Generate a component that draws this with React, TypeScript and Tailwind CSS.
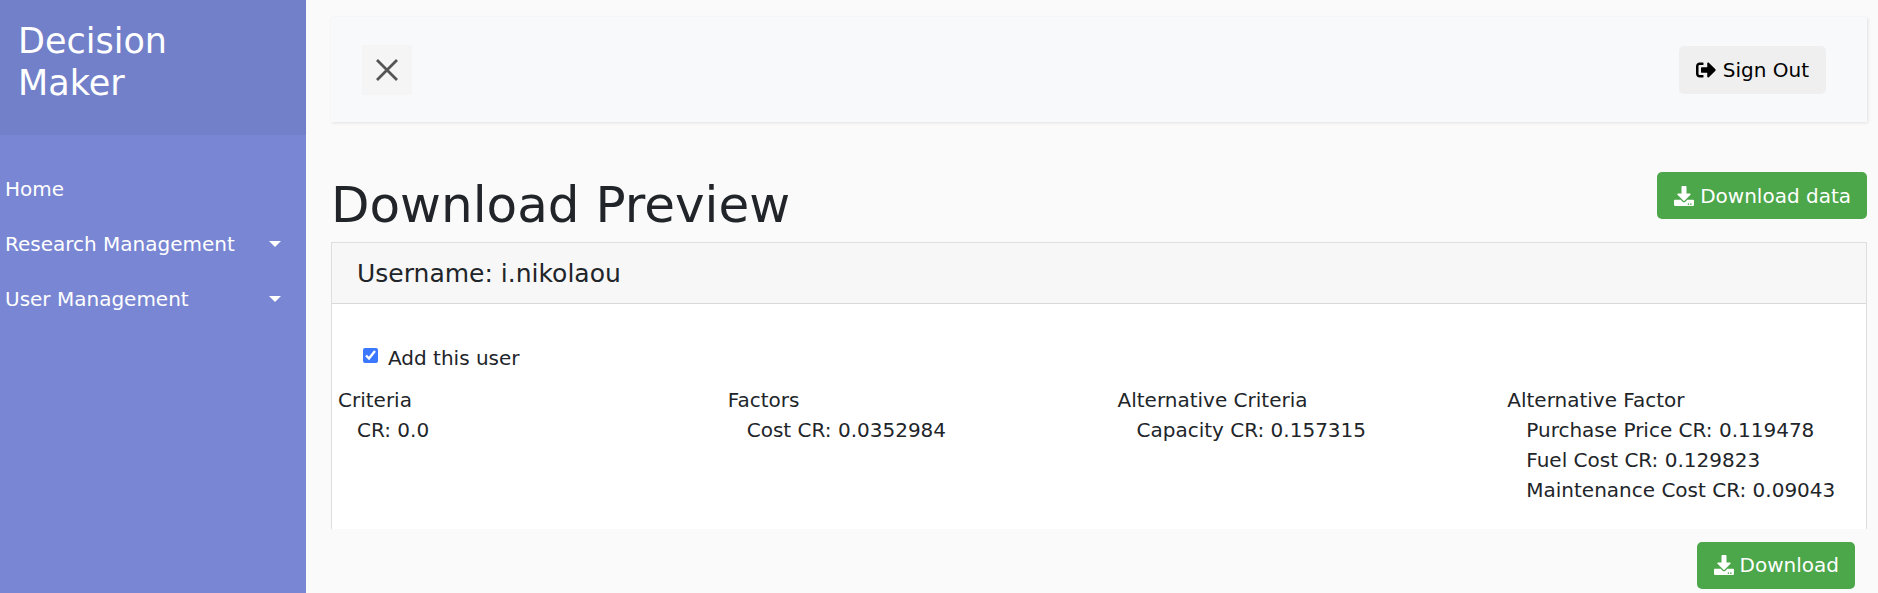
import { FaDownload, FaSignOutAlt } from "react-icons/fa";

const groups = [
  { title: "Criteria", items: ["CR: 0.0"] },
  { title: "Factors", items: ["Cost CR: 0.0352984"] },
  { title: "Alternative Criteria", items: ["Capacity CR: 0.157315"] },
  {
    title: "Alternative Factor",
    items: ["Purchase Price CR: 0.119478", "Fuel Cost CR: 0.129823", "Maintenance Cost CR: 0.09043"],
  },
];

const links = [
  { label: "Home", menu: false },
  { label: "Research Management", menu: true },
  { label: "User Management", menu: true },
];

function Caret() {
  return (
    <svg width="12" height="6" viewBox="0 0 12 6" fill="currentColor" aria-hidden="true">
      <path d="M0 0H12L6 6Z" />
    </svg>
  );
}

function DownloadButton({ label }: { label: string }) {
  return (
    <button type="button" className="flex h-[47px] items-center gap-[6px] rounded-[5px] bg-[#4ca64a] pr-4 pl-[17px] text-white">
      <FaDownload className="size-5" aria-hidden="true" />
      {label}
    </button>
  );
}

export default function App() {
  return (
    <div className="flex min-h-screen bg-[#fafafa] font-['DejaVu_Sans',sans-serif] text-[20px] leading-[30px] text-[#212529]">
      <aside className="w-[306px] shrink-0 bg-[#7986d3] text-white">
        <div className="bg-[#7280c9] px-[18px] pt-5 pb-[31px] text-[35px] leading-[42px]">
          <div className="w-40">Decision Maker</div>
        </div>
        <nav className="pt-[26px]">
          <ul>
            {links.map((link) => (
              <li key={link.label}>
                <a href="#" className="flex h-[55px] items-center justify-between pr-[25px] pl-[5px]">
                  {link.label}
                  {link.menu && <Caret />}
                </a>
              </li>
            ))}
          </ul>
        </nav>
      </aside>

      <main className="min-w-0 flex-1 pt-[17px] pr-[11px] pl-[25px]">
        <header className="flex h-[105px] items-center justify-between bg-[#f8f9fb] pr-[41px] pl-[31px] shadow-[1px_1px_3px_rgba(0,0,0,0.1)]">
          <button type="button" aria-label="Toggle sidebar" className="flex size-[50px] items-center justify-center bg-[#f5f5f5] text-[#555]">
            <svg width="22" height="22" viewBox="0 0 22 22" stroke="currentColor" strokeWidth="2.8" aria-hidden="true">
              <path d="M1 1L21 21M21 1L1 21" />
            </svg>
          </button>
          <button type="button" className="flex h-12 items-center gap-[7px] rounded-[5px] bg-[#efefef] px-[17px] text-black">
            <FaSignOutAlt className="size-5" aria-hidden="true" />
            Sign Out
          </button>
        </header>

        <div className="mt-[50px] flex items-start justify-between">
          <h1 className="pt-[3px] text-[50px] leading-[60px]">Download Preview</h1>
          <DownloadButton label="Download data" />
        </div>

        <section className="mt-[7px] overflow-hidden border border-b-0 border-[#dedede] bg-white">
          <h2 className="border-b border-[#d9d9d9] bg-[#f7f7f7] px-[25px] pt-4 pb-[14px] text-[25px]">Username: i.nikolaou</h2>
          <div className="pt-[37px] pb-6 pl-[6px]">
            <label className="ml-[25px] inline-flex items-center gap-[10px]">
              <input type="checkbox" defaultChecked className="mb-1 size-[15px] accent-[#3b78ff]" />
              Add this user
            </label>
            <div className="-mr-[31px] mt-3 grid grid-cols-4">
              {groups.map((group) => (
                <div key={group.title}>
                  <h3>{group.title}</h3>
                  <ul className="pl-[19px]">
                    {group.items.map((item) => (
                      <li key={item}>{item}</li>
                    ))}
                  </ul>
                </div>
              ))}
            </div>
          </div>
        </section>

        <div className="mt-[13px] mr-3 flex justify-end">
          <DownloadButton label="Download" />
        </div>
      </main>
    </div>
  );
}
